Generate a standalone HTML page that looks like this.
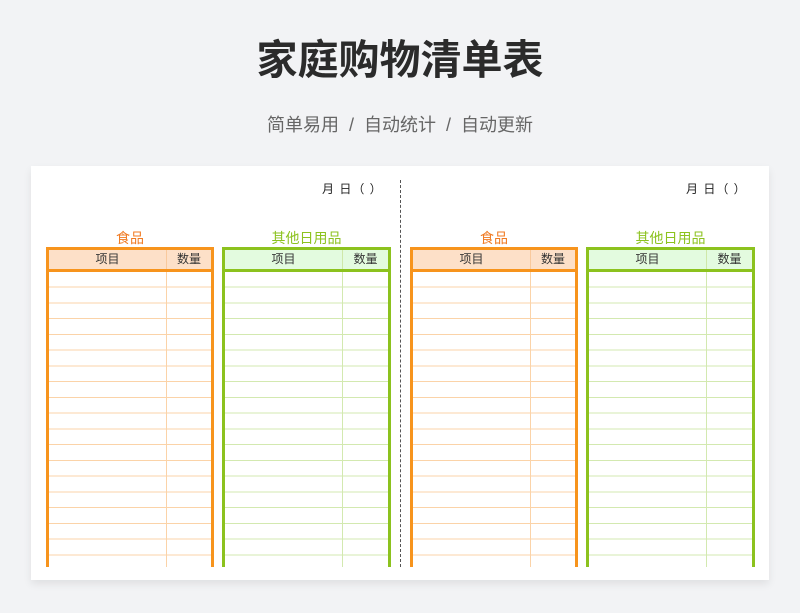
<!DOCTYPE html>
<html><head><meta charset="utf-8"><style>
body{margin:0;width:800px;height:613px;background:#f2f3f5;font-family:"Liberation Sans","Noto Sans CJK SC",sans-serif;position:relative;overflow:hidden}
.t{position:absolute;left:0;width:800px;text-align:center}
.card{position:absolute;left:31px;top:166px;width:738px;height:414px;background:#fff;box-shadow:0 4px 8px rgba(0,0,0,.08)}
.date{position:absolute;top:180px;font-size:12px;color:#222;letter-spacing:1px}
.cap{position:absolute;top:228px;font-size:14px;text-align:center}
.tb{position:absolute;top:247px;height:320px;box-sizing:border-box;border:3px solid;border-bottom:none}
.hd{position:absolute;left:0;right:0;top:0;height:19px;font-size:12px;color:#333;line-height:19px;border-bottom:3px solid}
.hd span{position:absolute;text-align:center}
.bd{position:absolute;left:0;right:0;top:22px;bottom:0}
.vl{position:absolute;top:0;bottom:0;width:1px}
</style></head><body>
<div class="t" style="top:33px;font-size:41px;font-weight:bold;color:#2b2b2b;line-height:54px">家庭购物清单表</div>
<div class="t" style="top:113px;font-size:18px;color:#666;line-height:24px;word-spacing:0">简单易用 &nbsp;/&nbsp; 自动统计 &nbsp;/&nbsp; 自动更新</div>
<div class="card"></div>
<div style="position:absolute;left:400px;top:180px;height:387px;border-left:1.5px dashed #555"></div>
<div class="date" style="left:322px">月 日（ ）</div>
<div class="date" style="left:686px">月 日（ ）</div>

<div class="cap" style="left:46px;width:168px;color:#f07a22">食品</div>
<div class="cap" style="left:222px;width:169px;color:#8cc21e">其他日用品</div>
<div class="cap" style="left:410px;width:168px;color:#f07a22">食品</div>
<div class="cap" style="left:586px;width:169px;color:#8cc21e">其他日用品</div>

<!-- orange tables -->
<div class="tb" style="left:46px;width:168px;border-color:#f7941d">
 <div class="hd" style="background:#fde0c8;border-color:#f7941d"><span style="left:0;width:117px">项目</span><span style="left:118px;width:44px">数量</span><div class="vl" style="left:117px;background:#f9c99c"></div></div>
 <div class="bd" style="background:repeating-linear-gradient(to bottom,transparent 0,transparent 14.7px,#fbd3a8 14.7px,#fbd3a8 15.74px)"><div class="vl" style="left:117px;background:#fbd3a8"></div></div>
</div>
<div class="tb" style="left:410px;width:168px;border-color:#f7941d">
 <div class="hd" style="background:#fde0c8;border-color:#f7941d"><span style="left:0;width:117px">项目</span><span style="left:118px;width:44px">数量</span><div class="vl" style="left:117px;background:#f9c99c"></div></div>
 <div class="bd" style="background:repeating-linear-gradient(to bottom,transparent 0,transparent 14.7px,#fbd3a8 14.7px,#fbd3a8 15.74px)"><div class="vl" style="left:117px;background:#fbd3a8"></div></div>
</div>
<!-- green tables -->
<div class="tb" style="left:222px;width:169px;border-color:#8cc21e">
 <div class="hd" style="background:#e3fbdf;border-color:#8cc21e"><span style="left:0;width:117px">项目</span><span style="left:118px;width:45px">数量</span><div class="vl" style="left:117px;background:#cfe8a8"></div></div>
 <div class="bd" style="background:repeating-linear-gradient(to bottom,transparent 0,transparent 14.7px,#d3e9b0 14.7px,#d3e9b0 15.74px)"><div class="vl" style="left:117px;background:#d3e9b0"></div></div>
</div>
<div class="tb" style="left:586px;width:169px;border-color:#8cc21e">
 <div class="hd" style="background:#e3fbdf;border-color:#8cc21e"><span style="left:0;width:117px">项目</span><span style="left:118px;width:45px">数量</span><div class="vl" style="left:117px;background:#cfe8a8"></div></div>
 <div class="bd" style="background:repeating-linear-gradient(to bottom,transparent 0,transparent 14.7px,#d3e9b0 14.7px,#d3e9b0 15.74px)"><div class="vl" style="left:117px;background:#d3e9b0"></div></div>
</div>
</body></html>
